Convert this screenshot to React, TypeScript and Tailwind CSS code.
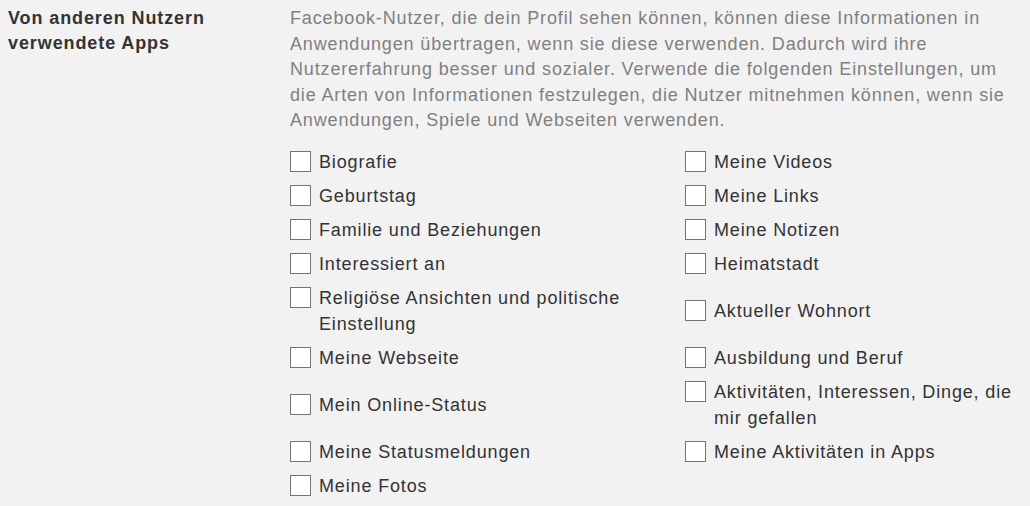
const rows: [string, string | null][] = [
  ["Biografie", "Meine Videos"],
  ["Geburtstag", "Meine Links"],
  ["Familie und Beziehungen", "Meine Notizen"],
  ["Interessiert an", "Heimatstadt"],
  ["Religiöse Ansichten und politische Einstellung", "Aktueller Wohnort"],
  ["Meine Webseite", "Ausbildung und Beruf"],
  ["Mein Online-Status", "Aktivitäten, Interessen, Dinge, die mir gefallen"],
  ["Meine Statusmeldungen", "Meine Aktivitäten in Apps"],
  ["Meine Fotos", null],
];

function Option({ label }: { label: string }) {
  return (
    <label className="flex items-start gap-[8px] py-[4px]">
      <span className="mt-[2px] h-[21px] w-[21px] shrink-0 border border-[#747474] bg-white" />
      <span className="text-[18px] leading-[26px] tracking-[0.85px] text-[#333333]">{label}</span>
    </label>
  );
}

export default function App() {
  return (
    <div className="min-h-[506px] w-[1030px] bg-[#f2f2f2] font-['Liberation_Sans',Arial,sans-serif]">
      <div className="flex pt-[6px]">
        <h3 className="w-[290px] shrink-0 pl-[8px] text-[18px] font-bold leading-[25px] tracking-[0.9px] text-[#333333]">
          Von anderen Nutzern
          <br />
          verwendete Apps
        </h3>
        <div className="w-[730px]">
          <p className="text-[18px] leading-[25.5px] tracking-[0.85px] text-[#808080]">
            Facebook-Nutzer, die dein Profil sehen können, können diese Informationen in Anwendungen
            übertragen, wenn sie diese verwenden. Dadurch wird ihre Nutzererfahrung besser und
            sozialer. Verwende die folgenden Einstellungen, um die Arten von Informationen
            festzulegen, die Nutzer mitnehmen können, wenn sie Anwendungen, Spiele und Webseiten
            verwenden.
          </p>
          <div className="mt-[11px] grid grid-cols-[395px_335px] items-center">
            {rows.map(([left, right]) => (
              <div key={left} className="contents">
                <Option label={left} />
                {right ? <Option label={right} /> : <div />}
              </div>
            ))}
          </div>
        </div>
      </div>
    </div>
  );
}
